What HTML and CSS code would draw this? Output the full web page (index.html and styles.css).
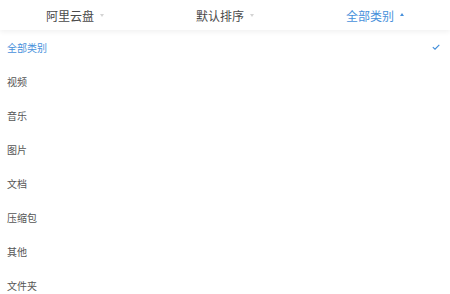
FILE: index.html
```html
<!DOCTYPE html>
<html lang="zh-CN">
<head>
    <meta charset="UTF-8">
    <meta name="viewport" content="width=device-width, initial-scale=1.0">
    <title>文件筛选</title>
    <link rel="stylesheet" href="styles.css">
</head>
<body>

    <!-- 顶部筛选栏 -->
    <div class="filter-bar">
        <div class="filter-item">
            <span>阿里云盘</span>
            <span class="arrow"></span>
        </div>
        <div class="filter-item">
            <span>默认排序</span>
            <span class="arrow"></span>
        </div>
        <div class="filter-item active">
            <span>全部类别</span>
            <span class="arrow up"></span>
        </div>
    </div>

    <!-- 类别列表 -->
    <ul class="option-list">
        <li class="option selected">
            <span>全部类别</span>
            <svg class="check" width="8" height="6" viewBox="0 0 8 6">
                <path d="M0.8 3.2 L3 5.2 L7.3 0.8" fill="none" stroke="#3d8bd9" stroke-width="1.1"/>
            </svg>
        </li>
        <li class="option">视频</li>
        <li class="option">音乐</li>
        <li class="option">图片</li>
        <li class="option">文档</li>
        <li class="option">压缩包</li>
        <li class="option">其他</li>
        <li class="option">文件夹</li>
    </ul>

</body>
</html>
```

FILE: styles.css
```css
body {
    font-family: "Noto Sans CJK SC", "Noto Sans", sans-serif;
    margin: 0;
    background-color: #fff;
    color: #444;
    overflow: hidden;
}

.filter-bar {
    display: flex;
    height: 30px;
    position: relative;
    z-index: 1;
    background-color: #fff;
    box-shadow: 0 2px 5px rgba(0, 0, 0, 0.06);
}

.filter-item {
    flex: 1;
    display: flex;
    justify-content: center;
    align-items: center;
    gap: 6px;
    font-size: 12px;
    color: #4a4a4a;
}

    .filter-item.active {
        color: #4790db;
    }

.arrow {
    width: 0;
    height: 0;
    border-left: 2.5px solid transparent;
    border-right: 2.5px solid transparent;
    border-top: 3px solid #d4d4d4;
    margin-top: 1px;
}

    .arrow.up {
        border-top: none;
        border-bottom: 3px solid #4790db;
        margin-top: -1px;
    }

.option-list {
    list-style: none;
    margin: 0;
    padding: 0;
}

.option {
    display: flex;
    justify-content: space-between;
    align-items: center;
    height: 34px;
    padding: 0 10px 0 7px;
    font-size: 10px;
    color: #555;
}

    .option.selected {
        color: #4790db;
    }

.check {
    display: block;
}
```
